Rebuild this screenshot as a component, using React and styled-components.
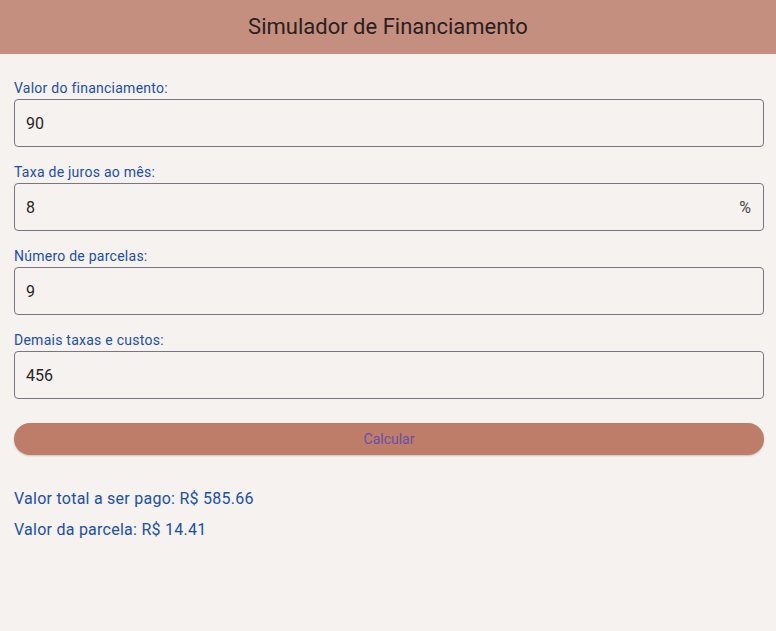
import React, {useState} from 'react'
import styled, {createGlobalStyle} from 'styled-components'

const GlobalStyle = createGlobalStyle`
    body {
        margin: 0;
        background: #f5f2ef;
        font-family: Roboto, "Liberation Sans", sans-serif;
    }
`

export default function App() {
    const [valor, setValor] = useState('90')
    const [juros, setJuros] = useState('8')
    const [parcelas, setParcelas] = useState('9')
    const [taxas, setTaxas] = useState('456')

    return (
        <Page>
            <GlobalStyle />
            <Header>Simulador de Financiamento</Header>
            <Content>
                <Field>
                    <Label>Valor do financiamento:</Label>
                    <InputBox>
                        <Input value={valor} onChange={e => setValor(e.target.value)} />
                    </InputBox>
                </Field>
                <Field>
                    <Label>Taxa de juros ao mês:</Label>
                    <InputBox>
                        <Input value={juros} onChange={e => setJuros(e.target.value)} />
                        <Suffix>%</Suffix>
                    </InputBox>
                </Field>
                <Field>
                    <Label>Número de parcelas:</Label>
                    <InputBox>
                        <Input value={parcelas} onChange={e => setParcelas(e.target.value)} />
                    </InputBox>
                </Field>
                <Field>
                    <Label>Demais taxas e custos:</Label>
                    <InputBox>
                        <Input value={taxas} onChange={e => setTaxas(e.target.value)} />
                    </InputBox>
                </Field>
                <Button>Calcular</Button>
                <Results>
                    <ResultLine>Valor total a ser pago: R$ 585.66</ResultLine>
                    <ResultLine>Valor da parcela: R$ 14.41</ResultLine>
                </Results>
            </Content>
        </Page>
    )
}

const Page = styled.div`
    min-height: 100vh;
    background: #f5f2ef;
`

const Header = styled.header`
    height: 54px;
    background: #c48f7e;
    color: #2b201e;
    font-size: 22px;
    display: flex;
    align-items: center;
    justify-content: center;
    padding-bottom: 1px;
    box-sizing: border-box;
`

const Content = styled.main`
    padding: 25px 12px 0 14px;
    display: flex;
    flex-direction: column;
    gap: 16px;
`

const Field = styled.div`
    display: flex;
    flex-direction: column;
    gap: 2px;
`

const Label = styled.label`
    font-size: 14px;
    line-height: 18px;
    letter-spacing: 0.25px;
    color: #1d4fa3;
`

const InputBox = styled.div`
    height: 48px;
    box-sizing: border-box;
    border: 1px solid #7b7482;
    border-radius: 4px;
    display: flex;
    align-items: center;
    padding: 0 12px 0 11px;
`

const Input = styled.input`
    flex: 1;
    border: none;
    outline: none;
    background: transparent;
    font-family: inherit;
    font-size: 16px;
    color: #2a2426;
    padding: 0;
`

const Suffix = styled.span`
    font-size: 16px;
    color: #4a4448;
`

const Button = styled.button`
    margin-top: 8px;
    height: 32px;
    border: none;
    border-radius: 16px;
    background: #be7d69;
    color: #6650a8;
    font-family: inherit;
    font-size: 14px;
    box-shadow: 0 1px 2px rgba(0, 0, 0, 0.2);
    cursor: pointer;
`

const Results = styled.div`
    margin-top: 18px;
    display: flex;
    flex-direction: column;
    gap: 12px;
`

const ResultLine = styled.p`
    margin: 0;
    font-size: 16px;
    line-height: 19px;
    letter-spacing: 0.25px;
    color: #1d4fa3;
`
